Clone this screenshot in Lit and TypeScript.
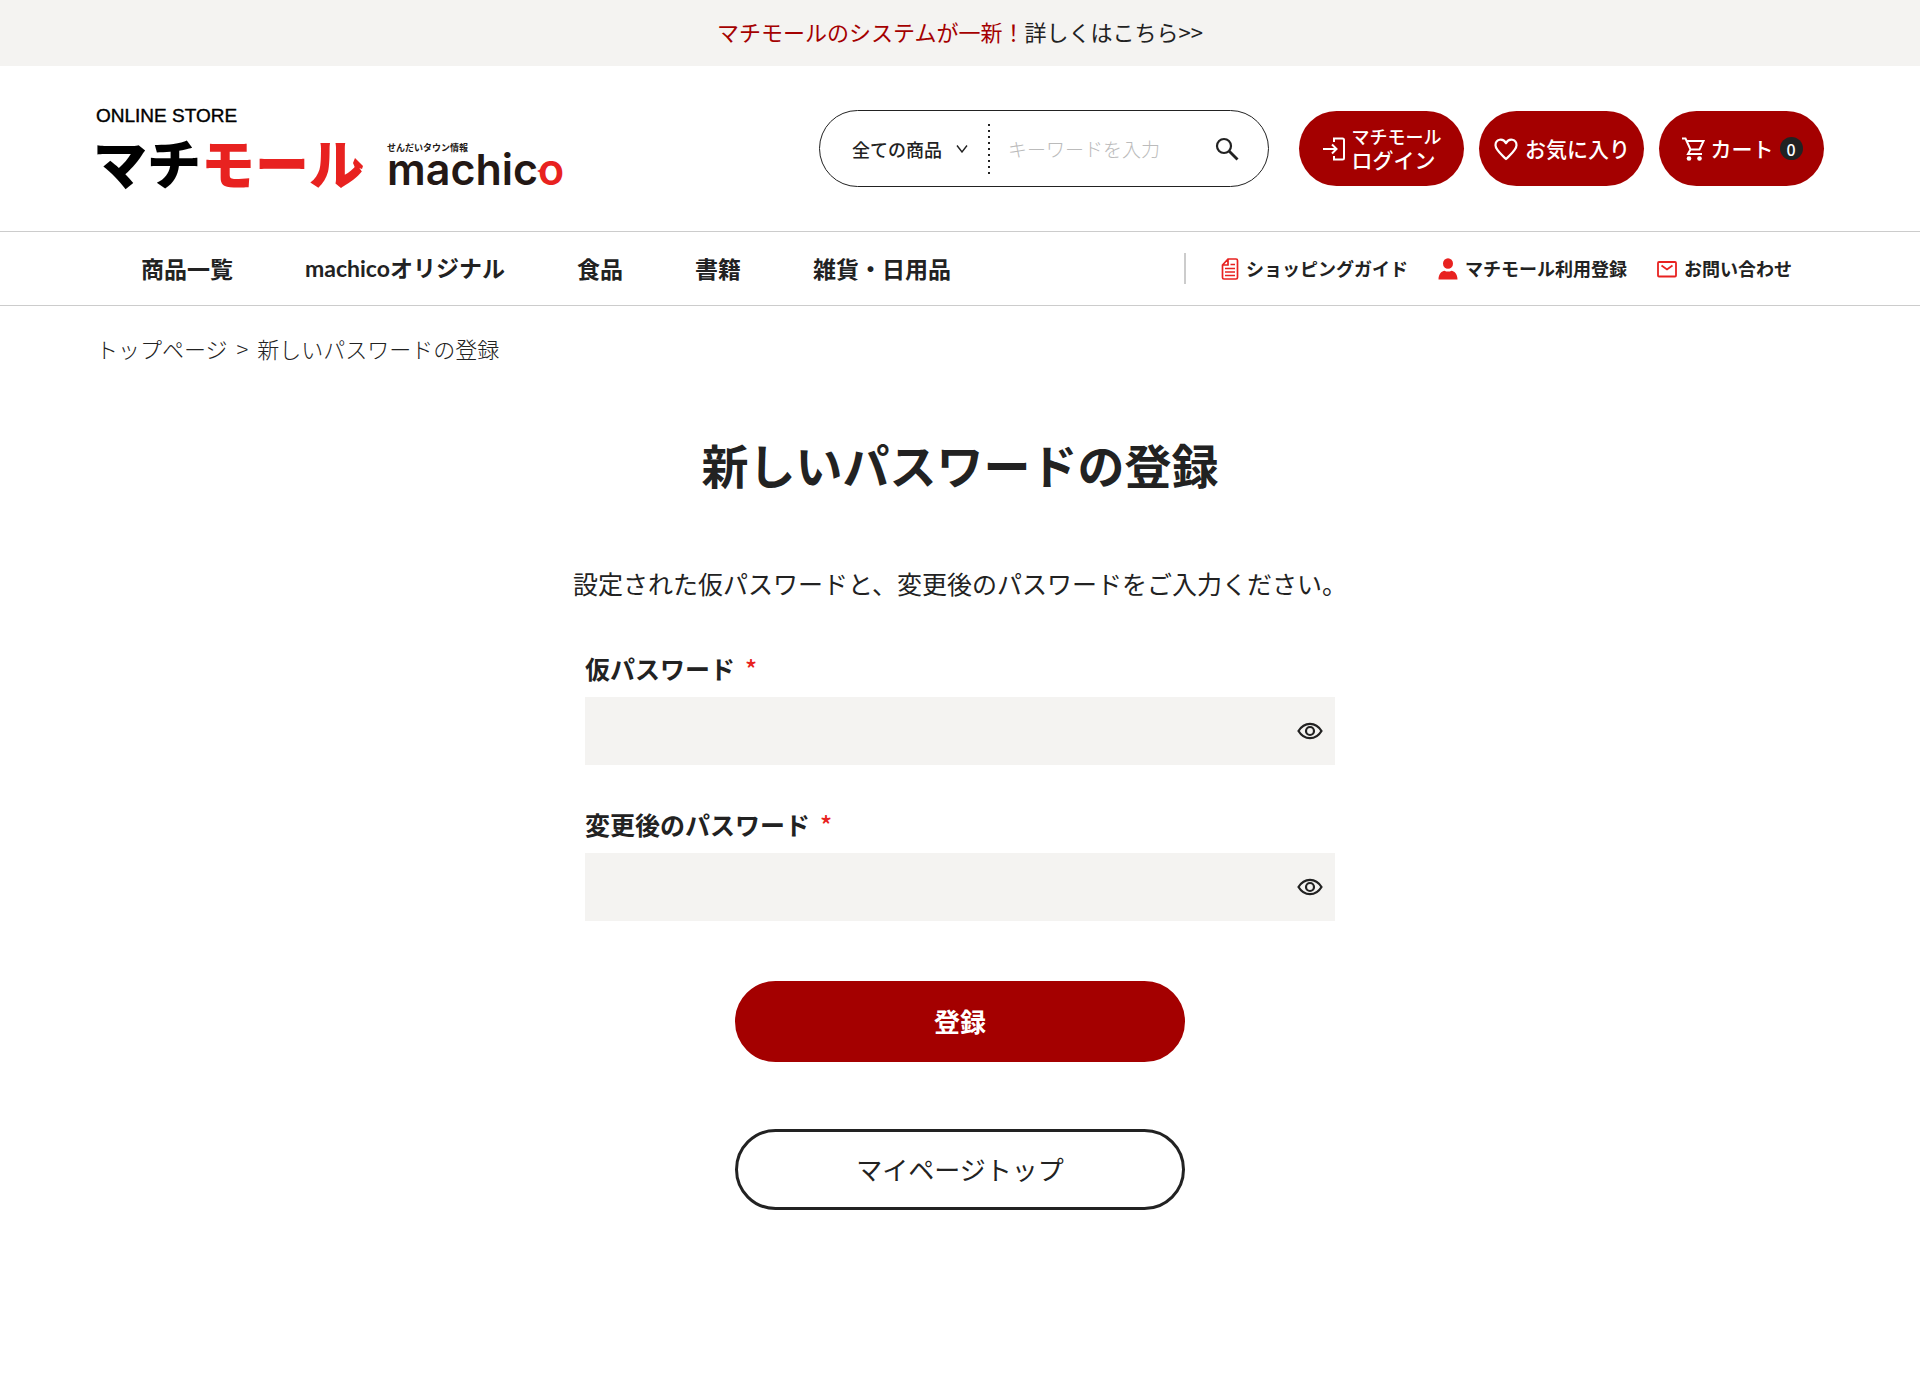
import { LitElement, html, css, svg } from "lit";
import { customElement, property, state } from "lit/decorators.js";

const fontStack = css`"Noto Sans CJK JP", "Noto Sans", sans-serif`;

const icons = {
  login: svg`<svg width="24" height="24" viewBox="0 0 24 24" fill="none" stroke="currentColor" stroke-width="2" aria-hidden="true">
    <path d="M12 5V1.500h8.500a1.500 1.500 0 0 1 1.500 1.500v18a1.500 1.500 0 0 1-1.500 1.500H12V19M1 12h13M10 7.500l4.500 4.500L10 16.500"/></svg>`,
  heart: svg`<svg width="26" height="24" viewBox="0 0 26 24" fill="none" stroke="currentColor" stroke-width="2.200" stroke-linejoin="round" aria-hidden="true">
    <path d="M13 22C8 17 2.500 13 2.500 8.300 2.500 1.800 10 .600 13 6.200 16 .600 23.500 1.800 23.500 8.300c0 4.700-5.500 8.700-10.500 13.700z"/></svg>`,
  cart: svg`<svg width="24" height="24" viewBox="0 0 24 24" fill="none" stroke="currentColor" stroke-width="2" aria-hidden="true">
    <path d="M1 1.500h3.500l5 11h9l4-8.500H5.800M9.500 12.500L7 17h14"/><circle cx="8" cy="21.500" r="2.300" fill="currentColor" stroke="none"/><circle cx="18.500" cy="21.500" r="2.300" fill="currentColor" stroke="none"/></svg>`,
  search: svg`<svg width="24" height="24" viewBox="0 0 24 24" fill="none" stroke="currentColor" aria-hidden="true">
    <circle cx="9" cy="9" r="7" stroke-width="2.200"/><path d="M14 14l8.500 8.500" stroke-width="2.800"/></svg>`,
  chevron: svg`<svg class="chevron" width="12" height="8" viewBox="0 0 12 8" fill="none" stroke="currentColor" stroke-width="1.400" aria-hidden="true">
    <path d="M1 .500l5 6.500 5-6.500"/></svg>`,
  guide: svg`<svg width="18" height="24" viewBox="0 0 18 24" fill="none" stroke="currentColor" stroke-width="1.700" aria-hidden="true">
    <path d="M7 2h8a1.500 1.500 0 0 1 1.500 1.500v17A1.500 1.500 0 0 1 15 22H3a1.500 1.500 0 0 1-1.500-1.500V8zM7 2v6H1.500M9.500 7.500H14M4 11.500h10M4 15h10M4 18.500h10"/></svg>`,
  person: svg`<svg width="20" height="24" viewBox="0 0 20 24" fill="currentColor" aria-hidden="true">
    <ellipse cx="10" cy="6.500" rx="5" ry="5.300"/><path d="M.500 22.500c0-6 3.500-8.500 6-8.800 2 1.200 5 1.200 7 0 2.500.300 6 2.800 6 8.800z"/></svg>`,
  mail: svg`<svg width="20" height="18" viewBox="0 0 20 18" fill="none" stroke="currentColor" stroke-width="1.800" aria-hidden="true">
    <rect x="1" y="2" width="18" height="14.500" rx="1"/><path d="M4.500 5.500L10 9.500l5.500-4"/></svg>`,
  eye: svg`<svg width="26" height="18" viewBox="0 0 26 18" fill="none" stroke="currentColor" stroke-width="2.200" aria-hidden="true">
    <path d="M1.500 9C4.500 4 8.500 1.800 13 1.800S21.500 4 24.500 9c-3 5-7 7.200-11.500 7.200S4.500 14 1.500 9z"/><circle cx="13" cy="9" r="4"/></svg>`,
};

@customElement("store-logo")
export class StoreLogo extends LitElement {
  static styles = css`
    :host { display: block; flex: none; }
    a { display: flex; align-items: flex-end; gap: 24px; padding-top: 2px; color: #000; text-decoration: none; white-space: nowrap; }
    span { display: block; }
    .store { font: 500 19px "Liberation Sans", sans-serif; line-height: 20px; -webkit-text-stroke: 0.4px #000; }
    .mall { position: relative; display: flex; margin: 4px 0 0 -3px; font: 900 54px ${fontStack}; line-height: 64px; }
    .hook { position: absolute; right: 0; top: 28px; fill: #e82220; }
    .tag { font: 700 9px ${fontStack}; line-height: 12px; color: #231815; }
    .brand { position: relative; font: 600 43px Inter, sans-serif; line-height: 30px; color: #231815; }
    .beak { position: absolute; right: 21px; top: 14px; fill: #e82220; }
    .machico { padding-bottom: 10px; }
    .mall .red, .brand .red { color: #e82220; display: inline; }
  `;
  render() {
    return html`<a href="#">
      <span>
        <span class="store">ONLINE STORE</span>
        <span class="mall">マチ<span class="red">モール</span>
          <svg class="hook" width="10" height="12" viewBox="0 0 10 12" aria-hidden="true"><path d="M0 5L2 0l8 8-1 3-3-1-3 2z" /></svg>
        </span>
      </span>
      <span class="machico">
        <span class="tag">せんだいタウン情報</span>
        <span class="brand">machic<span class="red">o</span>
          <svg class="beak" width="6" height="6" viewBox="0 0 6 6" aria-hidden="true"><path d="M0 3l6-3v6z" /></svg>
        </span>
      </span>
    </a>`;
  }
}

@customElement("password-field")
export class PasswordField extends LitElement {
  @property() label = "";
  @property() name = "";
  @state() private shown = false;

  static styles = css`
    :host { display: block; }
    * { box-sizing: border-box; }
    label { display: block; font-size: 25px; line-height: 32px; font-weight: 700; margin-bottom: 13px; }
    .required { color: #e82220; font-weight: 500; margin-left: 10px; }
    .box { display: flex; align-items: center; background: #f4f3f1; height: 68px; padding-right: 12px; }
    input { flex: 1; min-width: 0; height: 100%; border: 0; background: none; padding: 0 20px; font: inherit; font-size: 22px; color: inherit; }
    button { display: flex; border: 0; background: none; padding: 0; color: inherit; cursor: pointer; }
  `;
  render() {
    return html`
      <label for="field">${this.label}<span class="required">*</span></label>
      <div class="box">
        <input id="field" name=${this.name} type=${this.shown ? "text" : "password"} required />
        <button type="button" @click=${() => (this.shown = !this.shown)}>${icons.eye}</button>
      </div>`;
  }
}

@customElement("app-root")
export class AppRoot extends LitElement {
  private categories = [
    { text: "商品一覧", kind: "" },
    { text: "machicoオリジナル", kind: "latin" },
    { text: "食品", kind: "" },
    { text: "書籍", kind: "" },
    { text: "雑貨・日用品", kind: "" },
  ];
  private support = [
    { icon: icons.guide, text: "ショッピングガイド" },
    { icon: icons.person, text: "マチモール利用登録" },
    { icon: icons.mail, text: "お問い合わせ" },
  ];

  static styles = css`
    :host { display: block; color: #222; background: #fff; font-family: ${fontStack}; }
    * { box-sizing: border-box; }
    a { color: inherit; text-decoration: none; }
    svg { flex: none; }
    .notice { display: flex; justify-content: center; align-items: center; min-height: 66px; padding-bottom: 4px; background: #f4f3f1; font-size: 22px; line-height: 32px; }
    .notice em { font-style: normal; color: #a40000; }
    .header { display: flex; align-items: center; justify-content: space-between; min-height: 165px; padding: 0 5%; }
    .tools { display: flex; align-items: center; gap: 30px; }
    .search { display: flex; align-items: center; width: 450px; height: 77px; border: 1px solid #222; border-radius: 39px; padding: 0 29px 0 32px; }
    .search select { appearance: none; border: 0; background: none; padding: 0; width: 92px; color: inherit; font: 500 18px ${fontStack}; line-height: 28px; }
    .chevron { margin: 0 20px 0 12px; }
    .divider { width: 2px; height: 50px; background: repeating-linear-gradient(#222 0 2px, transparent 2px 6px); }
    .search input { flex: 1; min-width: 0; height: 50px; border: 0; background: none; padding: 0 0 0 18px; font: 300 19px ${fontStack}; color: inherit; }
    .search input::placeholder { color: #bbb; opacity: 1; }
    .search button { display: flex; border: 0; background: none; padding: 0; color: inherit; }
    .pills { display: flex; gap: 15px; }
    .pill { display: flex; align-items: center; justify-content: center; gap: 6px; width: 165px; height: 75px; border-radius: 38px; background: #a40000; color: #fff; font-size: 21px; line-height: 24px; font-weight: 500; white-space: nowrap; }
    .pill span { padding-bottom: 2px; }
    .pill small { display: block; font-size: 18px; line-height: 22px; }
    .pill .count { display: flex; align-items: center; justify-content: center; width: 23px; height: 23px; padding: 0; border-radius: 50%; background: #222; font-size: 16px; }
    .nav { display: flex; align-items: center; justify-content: space-between; min-height: 75px; padding: 0 128px 0 141px; border: solid #ccc; border-width: 1px 0; }
    .nav ul { display: flex; list-style: none; margin: 0; padding: 0; }
    .nav .categories { gap: 72px; padding-bottom: 2px; font-size: 23px; line-height: 32px; font-weight: 700; }
    .latin { font-family: Lato, ${fontStack}; }
    .nav .support { gap: 30px; align-items: center; padding-left: 35px; border-left: 2px solid #ccc; font-size: 18px; line-height: 31px; font-weight: 700; }
    .support a { display: flex; align-items: center; gap: 7px; }
    .support svg { color: #e82220; }
    .crumbs { display: flex; gap: 9px; padding: 26px 5% 0; font-size: 22px; line-height: 32px; font-weight: 300; }
    h1 { margin: 70px 0 69px; text-align: center; font-size: 47px; line-height: 60px; font-weight: 700; }
    .intro { margin: 0 0 49px; text-align: center; font-size: 25px; line-height: 40px; }
    .reset { display: flex; flex-direction: column; gap: 43px; width: 100%; max-width: 750px; margin: 0 auto; padding-bottom: 163px; }
    .actions { display: flex; flex-direction: column; align-items: center; gap: 67px; padding-top: 17px; }
    .action { display: flex; align-items: center; justify-content: center; width: 100%; max-width: 450px; height: 81px; padding-bottom: 3px; border: 3px solid #222; border-radius: 41px; font: 400 26px ${fontStack}; color: #222; }
    .submit { border-color: #a40000; background: #a40000; color: #fff; font-weight: 700; }
  `;

  render() {
    return html`
      <a class="notice" href="#"><em>マチモールのシステムが一新！</em>詳しくはこちら&gt;&gt;</a>
      <header class="header">
        <store-logo></store-logo>
        <div class="tools">
          <form class="search" role="search" @submit=${(e: Event) => e.preventDefault()}>
            <select aria-label="全ての商品"><option>全ての商品</option></select>
            ${icons.chevron}
            <span class="divider"></span>
            <input type="text" aria-label="キーワードを入力" placeholder="キーワードを入力" />
            <button type="submit">${icons.search}</button>
          </form>
          <div class="pills">
            <a class="pill" href="#">${icons.login}<span><small>マチモール</small>ログイン</span></a>
            <a class="pill" href="#">${icons.heart}<span>お気に入り</span></a>
            <a class="pill" href="#">${icons.cart}<span>カート</span><span class="count">0</span></a>
          </div>
        </div>
      </header>
      <nav class="nav">
        <ul class="categories">${this.categories.map((c) => html`<li class=${c.kind}><a href="#">${c.text}</a></li>`)}</ul>
        <ul class="support">${this.support.map((s) => html`<li><a href="#">${s.icon}<span>${s.text}</span></a></li>`)}</ul>
      </nav>
      <main>
        <div class="crumbs"><a href="#">トップページ</a><span>&gt;</span><span>新しいパスワードの登録</span></div>
        <h1>新しいパスワードの登録</h1>
        <p class="intro">設定された仮パスワードと、変更後のパスワードをご入力ください。</p>
        <form class="reset" @submit=${(e: Event) => e.preventDefault()}>
          <password-field label="仮パスワード" name="current"></password-field>
          <password-field label="変更後のパスワード" name="next"></password-field>
          <div class="actions">
            <button class="action submit" type="submit">登録</button>
            <a class="action" href="#">マイページトップ</a>
          </div>
        </form>
      </main>`;
  }
}
